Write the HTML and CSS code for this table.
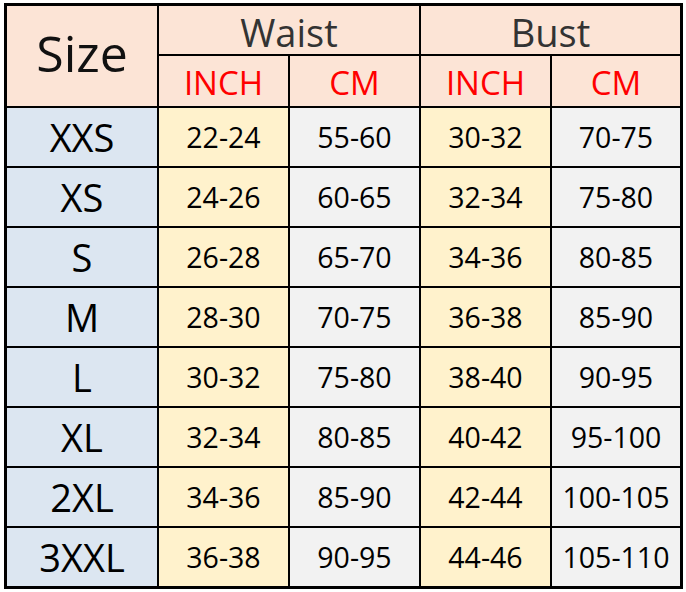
FILE: index.html
```html
<!DOCTYPE html>
<html>
<head>
<meta charset="utf-8">
<link rel="stylesheet" href="styles.css">
</head>
<body>
<div class="chart">
  <div class="cell head size-h">Size</div>
  <div class="cell head group">Waist</div>
  <div class="cell head group">Bust</div>
  <div class="cell head unit">INCH</div>
  <div class="cell head unit">CM</div>
  <div class="cell head unit">INCH</div>
  <div class="cell head unit">CM</div>

  <div class="cell size">XXS</div><div class="cell inch">22-24</div><div class="cell cm">55-60</div><div class="cell inch">30-32</div><div class="cell cm">70-75</div>
  <div class="cell size">XS</div><div class="cell inch">24-26</div><div class="cell cm">60-65</div><div class="cell inch">32-34</div><div class="cell cm">75-80</div>
  <div class="cell size">S</div><div class="cell inch">26-28</div><div class="cell cm">65-70</div><div class="cell inch">34-36</div><div class="cell cm">80-85</div>
  <div class="cell size">M</div><div class="cell inch">28-30</div><div class="cell cm">70-75</div><div class="cell inch">36-38</div><div class="cell cm">85-90</div>
  <div class="cell size">L</div><div class="cell inch">30-32</div><div class="cell cm">75-80</div><div class="cell inch">38-40</div><div class="cell cm">90-95</div>
  <div class="cell size">XL</div><div class="cell inch">32-34</div><div class="cell cm">80-85</div><div class="cell inch">40-42</div><div class="cell cm">95-100</div>
  <div class="cell size">2XL</div><div class="cell inch">34-36</div><div class="cell cm">85-90</div><div class="cell inch">42-44</div><div class="cell cm">100-105</div>
  <div class="cell size">3XXL</div><div class="cell inch">36-38</div><div class="cell cm">90-95</div><div class="cell inch">44-46</div><div class="cell cm">105-110</div>
</div>
</body>
</html>
```
FILE: styles.css
```css
html, body {
  margin: 0;
  padding: 0;
  background: #ffffff;
}
body {
  font-family: "Open Sans", "Noto Sans", sans-serif;
}
.chart {
  margin: 3px 0 0 4px;
  width: 673px;
  display: grid;
  grid-template-columns: 150px 129px 129px 129px 128px;
  grid-template-rows: 48px 50px repeat(8, 58px);
  gap: 2px;
  background: #000;
  border: 3px solid #000;
}
.cell {
  display: flex;
  align-items: center;
  justify-content: center;
  color: #000;
  font-size: 28.5px;
  line-height: 1;
}
.head {
  background: #fce4d6;
}
.size-h {
  grid-row: 1 / span 2;
  font-size: 50px;
  color: #111;
  padding-bottom: 6px;
}
.group {
  grid-column: span 2;
  font-size: 38px;
  color: #333;
  padding-top: 3px;
}
.unit {
  font-size: 33px;
  color: #ff0000;
  padding-top: 2px;
}
.size {
  background: #dce6f1;
  font-size: 38px;
}
.inch {
  background: #fff2cc;
}
.cm {
  background: #f2f2f2;
}
```
